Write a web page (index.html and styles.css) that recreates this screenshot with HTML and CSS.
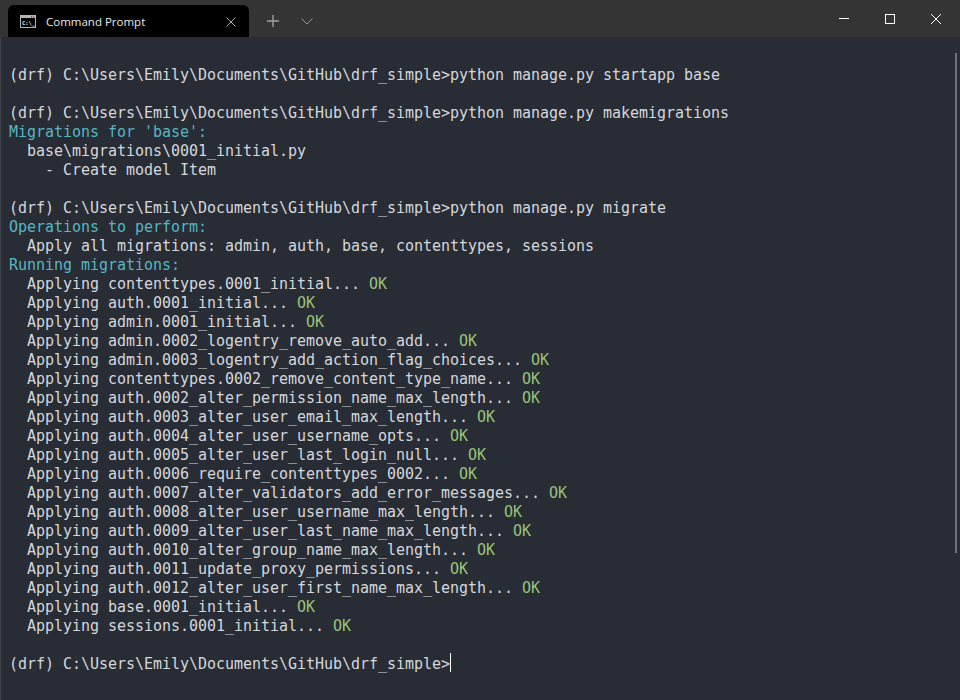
FILE: index.html
```html
<!DOCTYPE html>
<html lang="en">

<head>
    <meta charset="UTF-8">
    <meta name="viewport" content="width=device-width, initial-scale=1.0">
    <title>Command Prompt</title>
    <link rel="stylesheet" href="styles.css">
</head>

<body>
    <div class="window">
        <header class="titlebar">
            <div class="tab">
                <svg class="tab-icon" width="16" height="13" viewBox="0 0 16 13">
                    <rect x="0.5" y="0.5" width="15" height="12" fill="#000" stroke="#b4b4b4" />
                    <rect x="1" y="1" width="14" height="2" fill="#b4b4b4" />
                    <path d="M11 2h1M13 2h1" stroke="#333" />
                    <text x="2" y="9.5" class="tab-icon-text">C:\_</text>
                </svg>
                <span class="tab-title">Command Prompt</span>
                <svg class="tab-close" width="10" height="10" viewBox="0 0 10 10">
                    <path d="M0.5 0.5l9 9M9.5 0.5l-9 9" stroke="#a8a8a8" stroke-width="1" fill="none" />
                </svg>
            </div>
            <button type="button" class="tab-btn">
                <svg width="12" height="12" viewBox="0 0 12 12">
                    <path d="M6 0v12M0 6h12" stroke="#a0a0a0" stroke-width="1.4" fill="none" />
                </svg>
            </button>
            <button type="button" class="tab-btn">
                <svg width="12" height="7" viewBox="0 0 12 7">
                    <path d="M0.5 0.5L6 6l5.5-5.5" stroke="#9a9a9a" stroke-width="1" fill="none" />
                </svg>
            </button>
            <div class="win-btns">
                <svg width="10" height="10" viewBox="0 0 10 10">
                    <path d="M0 4.5h10" stroke="#fff" fill="none" />
                </svg>
                <svg width="10" height="10" viewBox="0 0 10 10">
                    <rect x="0.5" y="0.5" width="9" height="9" stroke="#fff" fill="none" />
                </svg>
                <svg width="10" height="10" viewBox="0 0 10 10">
                    <path d="M0 0l10 10M10 0L0 10" stroke="#fff" fill="none" />
                </svg>
            </div>
        </header>

        <main class="terminal">
<pre class="output">

(drf) C:\Users\Emily\Documents\GitHub\drf_simple&gt;python manage.py startapp base

(drf) C:\Users\Emily\Documents\GitHub\drf_simple&gt;python manage.py makemigrations
<span class="teal">Migrations for 'base':</span>
  base\migrations\0001_initial.py
    - Create model Item

(drf) C:\Users\Emily\Documents\GitHub\drf_simple&gt;python manage.py migrate
<span class="teal">Operations to perform:</span>
  Apply all migrations: admin, auth, base, contenttypes, sessions
<span class="teal">Running migrations:</span>
  Applying contenttypes.0001_initial... <span class="green">OK</span>
  Applying auth.0001_initial... <span class="green">OK</span>
  Applying admin.0001_initial... <span class="green">OK</span>
  Applying admin.0002_logentry_remove_auto_add... <span class="green">OK</span>
  Applying admin.0003_logentry_add_action_flag_choices... <span class="green">OK</span>
  Applying contenttypes.0002_remove_content_type_name... <span class="green">OK</span>
  Applying auth.0002_alter_permission_name_max_length... <span class="green">OK</span>
  Applying auth.0003_alter_user_email_max_length... <span class="green">OK</span>
  Applying auth.0004_alter_user_username_opts... <span class="green">OK</span>
  Applying auth.0005_alter_user_last_login_null... <span class="green">OK</span>
  Applying auth.0006_require_contenttypes_0002... <span class="green">OK</span>
  Applying auth.0007_alter_validators_add_error_messages... <span class="green">OK</span>
  Applying auth.0008_alter_user_username_max_length... <span class="green">OK</span>
  Applying auth.0009_alter_user_last_name_max_length... <span class="green">OK</span>
  Applying auth.0010_alter_group_name_max_length... <span class="green">OK</span>
  Applying auth.0011_update_proxy_permissions... <span class="green">OK</span>
  Applying auth.0012_alter_user_first_name_max_length... <span class="green">OK</span>
  Applying base.0001_initial... <span class="green">OK</span>
  Applying sessions.0001_initial... <span class="green">OK</span>

(drf) C:\Users\Emily\Documents\GitHub\drf_simple&gt;<span class="cursor"></span></pre>
            <div class="scrollbar"></div>
        </main>
    </div>
</body>

</html>
```

FILE: styles.css
```css
* {
    margin: 0;
    padding: 0;
    box-sizing: border-box;
}

html,
body {
    height: 100%;
    overflow: hidden;
}

.window {
    display: flex;
    flex-direction: column;
    height: 700px;
    background-color: #282c34;
}

/* title bar */
.titlebar {
    display: flex;
    align-items: flex-end;
    height: 37px;
    flex-shrink: 0;
    padding-left: 8px;
    background-color: #343434;
}

.tab {
    display: flex;
    align-items: center;
    width: 241px;
    height: 32px;
    padding: 1px 13px 0 12px;
    background-color: #000;
    border-radius: 6px 6px 0 0;
}

.tab-icon {
    flex-shrink: 0;
}

.tab-icon-text {
    font-family: "DejaVu Sans Mono", monospace;
    font-size: 5.5px;
    font-weight: bold;
    fill: #e0e0e0;
}

.tab-title {
    flex: 1;
    margin-left: 10px;
    font-family: "Open Sans", sans-serif;
    font-size: 11.5px;
    color: #e8e8e8;
}

.tab-btn {
    display: flex;
    align-items: center;
    justify-content: center;
    width: 34px;
    height: 32px;
    background-color: transparent;
    border: 0;
}

.tab-btn:first-of-type {
    margin-left: 7px;
}

.win-btns {
    display: flex;
    gap: 36px;
    align-items: flex-start;
    height: 37px;
    margin-left: auto;
    padding: 14px 19px 0 0;
}

/* terminal */
.terminal {
    position: relative;
    flex: 1;
    overflow: hidden;
    padding: 10px 9px 0;
    border-left: 1px solid #3e4249;
}

.output {
    margin-left: -1px;
    font-family: "DejaVu Sans Mono", monospace;
    font-size: 15px;
    line-height: 19px;
    letter-spacing: -0.03px;
    color: #d4d7dc;
}

.teal {
    color: #56b6c2;
}

.green {
    color: #98c379;
}

.cursor {
    display: inline-block;
    width: 1px;
    height: 19px;
    margin-top: -2px;
    vertical-align: top;
    background-color: #fff;
}

.scrollbar {
    position: absolute;
    top: 16px;
    right: 3px;
    width: 2px;
    height: 500px;
    background-color: #6f7277;
}
```
